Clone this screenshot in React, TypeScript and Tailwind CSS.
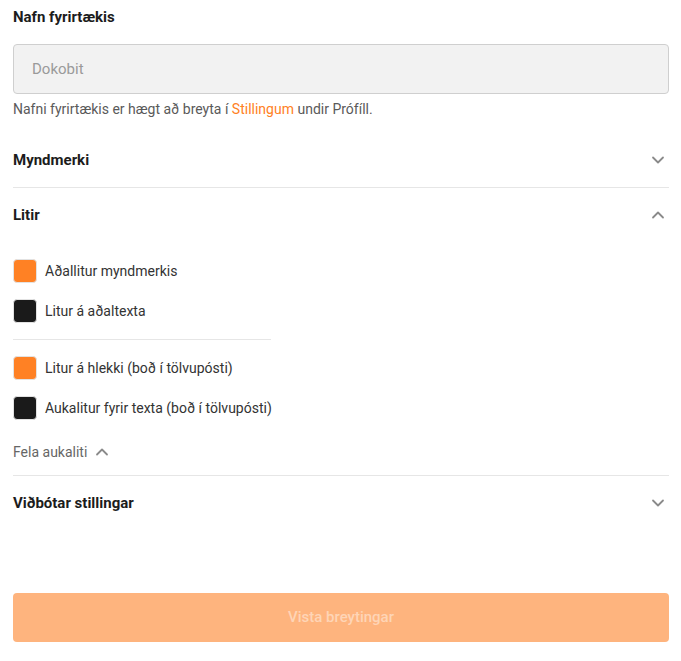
import { useState } from 'react';

function Chevron({ up }: { up?: boolean }) {
  return (
    <svg
      width="14"
      height="14"
      viewBox="0 0 14 14"
      fill="none"
      stroke="#8a8a8a"
      strokeWidth="1.8"
      strokeLinecap="round"
      strokeLinejoin="round"
    >
      {up ? <path d="M2 9.5 7 4.5l5 5" /> : <path d="M2 4.5l5 5 5-5" />}
    </svg>
  );
}

function SectionHeader({
  title,
  open,
  onClick,
}: {
  title: string;
  open?: boolean;
  onClick?: () => void;
}) {
  return (
    <button
      type="button"
      onClick={onClick}
      className="flex h-[54px] w-full items-center justify-between text-left"
    >
      <span className="text-[15px] font-bold text-[#1c1c1c]">{title}</span>
      <span className="mr-[4px]">
        <Chevron up={open} />
      </span>
    </button>
  );
}

function ColorRow({ color, label }: { color: string; label: string }) {
  return (
    <div className="flex h-[24px] items-center gap-[8px]">
      <span
        className="h-[24px] w-[24px] rounded-[4px] border border-[#e2e2e2]"
        style={{ backgroundColor: color }}
      />
      <span className="text-[14px] text-[#333]">{label}</span>
    </div>
  );
}

export default function App() {
  const [colorsOpen, setColorsOpen] = useState(true);

  return (
    <div
      className="h-[661px] w-[681px] bg-white pl-[13px] pr-[12px] pt-[7px]"
      style={{ fontFamily: 'Roboto, "Liberation Sans", sans-serif' }}
    >
      <div className="text-[15px] font-bold leading-[20px] text-[#1c1c1c]">
        Nafn fyrirtækis
      </div>
      <input
        disabled
        value="Dokobit"
        className="mt-[17px] h-[50px] w-full rounded-[4px] border border-[#cfcfcf] bg-[#f2f2f2] px-[18px] text-[15px] text-[#9a9a9a]"
      />
      <p className="mt-[6px] text-[14px] leading-[18px] text-[#5a5a5a]">
        Nafni fyrirtækis er hægt að breyta í{' '}
        <span className="text-[#ff8124]">Stillingum</span> undir Prófíll.
      </p>

      <div className="mt-[15px]">
        <div className="border-b border-[#e6e6e6]">
          <SectionHeader title="Myndmerki" />
        </div>

        <div className="border-b border-[#e6e6e6]">
          <SectionHeader
            title="Litir"
            open={colorsOpen}
            onClick={() => setColorsOpen(!colorsOpen)}
          />
          {colorsOpen && (
            <div className="pt-[17px] pb-[13px]">
              <div className="flex flex-col gap-[16px]">
                <ColorRow color="#ff8124" label="Aðallitur myndmerkis" />
                <ColorRow color="#1a1a1a" label="Litur á aðaltexta" />
              </div>
              <div className="my-[16px] w-[258px] border-t border-[#e6e6e6]" />
              <div className="flex flex-col gap-[16px]">
                <ColorRow color="#ff8124" label="Litur á hlekki (boð í tölvupósti)" />
                <ColorRow color="#1a1a1a" label="Aukalitur fyrir texta (boð í tölvupósti)" />
              </div>
              <button
                type="button"
                className="mt-[22px] flex items-center gap-[8px] text-[14px] leading-[20px] text-[#666]"
              >
                Fela aukaliti
                <Chevron up />
              </button>
            </div>
          )}
        </div>

        <SectionHeader title="Viðbótar stillingar" />
      </div>

      <button
        type="button"
        disabled
        className="mt-[63px] h-[49px] w-full rounded-[4px] bg-[#feb47e] text-[15px] font-medium text-[#fed5b6]"
      >
        Vista breytingar
      </button>
    </div>
  );
}
